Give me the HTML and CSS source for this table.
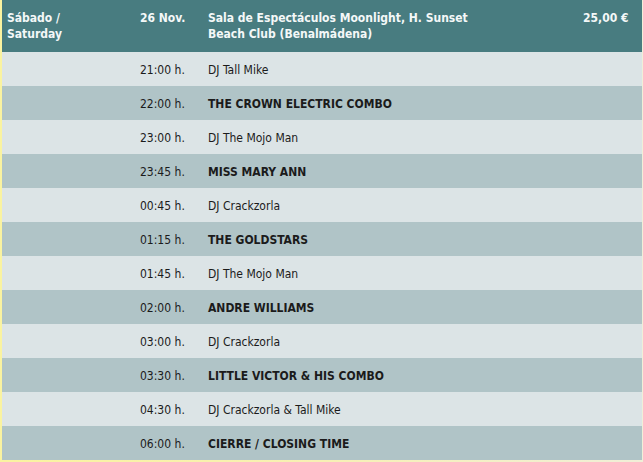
FILE: index.html
```html
<!DOCTYPE html>
<html lang="es">
<head>
<meta charset="utf-8">
<title>Programa</title>
<link rel="stylesheet" href="styles.css">
</head>
<body>
<div class="page">
  <div class="schedule">
    <div class="row head">
      <div class="c day">Sábado /<br>Saturday</div>
      <div class="c date">26 Nov.</div>
      <div class="c venue"><span class="venue-text">Sala de Espectáculos Moonlight, H. Sunset Beach Club (Benalmádena)</span></div>
      <div class="c price">25,00 €</div>
    </div>
    <div class="row light"><div class="c"></div><div class="c">21:00 h.</div><div class="c">DJ Tall Mike</div><div class="c"></div></div>
    <div class="row dark"><div class="c"></div><div class="c">22:00 h.</div><div class="c b">THE CROWN ELECTRIC COMBO</div><div class="c"></div></div>
    <div class="row light"><div class="c"></div><div class="c">23:00 h.</div><div class="c">DJ The Mojo Man</div><div class="c"></div></div>
    <div class="row dark"><div class="c"></div><div class="c">23:45 h.</div><div class="c b">MISS MARY ANN</div><div class="c"></div></div>
    <div class="row light"><div class="c"></div><div class="c">00:45 h.</div><div class="c">DJ Crackzorla</div><div class="c"></div></div>
    <div class="row dark"><div class="c"></div><div class="c">01:15 h.</div><div class="c b">THE GOLDSTARS</div><div class="c"></div></div>
    <div class="row light"><div class="c"></div><div class="c">01:45 h.</div><div class="c">DJ The Mojo Man</div><div class="c"></div></div>
    <div class="row dark"><div class="c"></div><div class="c">02:00 h.</div><div class="c b">ANDRE WILLIAMS</div><div class="c"></div></div>
    <div class="row light"><div class="c"></div><div class="c">03:00 h.</div><div class="c">DJ Crackzorla</div><div class="c"></div></div>
    <div class="row dark"><div class="c"></div><div class="c">03:30 h.</div><div class="c b">LITTLE VICTOR &amp; HIS COMBO</div><div class="c"></div></div>
    <div class="row light"><div class="c"></div><div class="c">04:30 h.</div><div class="c">DJ Crackzorla &amp; Tall Mike</div><div class="c"></div></div>
    <div class="row dark"><div class="c"></div><div class="c">06:00 h.</div><div class="c b">CIERRE / CLOSING TIME</div><div class="c"></div></div>
  </div>
</div>
</body>
</html>
```

FILE: styles.css
```css
html, body {
  margin: 0;
  padding: 0;
}
body {
  background: linear-gradient(90deg, #faf3a0 0%, #f7f0b4 50%, #f0efd8 100%);
  font-family: "DejaVu Sans Condensed", "DejaVu Sans", Verdana, sans-serif;
  font-stretch: condensed;
  font-size: 12px;
  color: #1b1b1b;
  height: 462px;
  overflow: hidden;
}
.page {
  padding: 0 1px 0 2px;
}
.schedule {
  display: flex;
  flex-direction: column;
  width: 640px;
}
.row {
  display: grid;
  grid-template-columns: 133px 68px 375px 64px;
  line-height: 16px;
}
.c {
  padding: 10px 0 8px 5px;
}
.head {
  background: #487c80;
  color: #f4f8f8;
  font-weight: bold;
}
.head .c {
  padding-top: 10px;
  padding-bottom: 10px;
}
.venue-text {
  display: block;
  max-width: 285px;
}
.light {
  background: #dce4e6;
}
.dark {
  background: #b0c4c7;
}
.b {
  font-weight: bold;
}
```
